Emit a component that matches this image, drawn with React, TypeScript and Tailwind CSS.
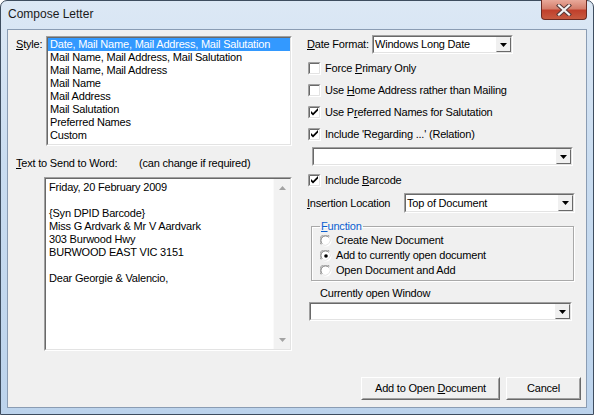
import React from "react";

const U = ({ children }: { children: React.ReactNode }) => (
  <span className="underline decoration-1 underline-offset-[1px]">{children}</span>
);

const Sunken = ({ className = "", children }: { className?: string; children?: React.ReactNode }) => (
  <div className={`border border-t-[#a0a0a0] border-l-[#a0a0a0] border-b-white border-r-white ${className}`}>
    <div className="w-full h-full border border-t-[#696969] border-l-[#696969] border-b-[#e3e3e3] border-r-[#e3e3e3] bg-white flex">
      {children}
    </div>
  </div>
);

const DropBtn = () => (
  <div className="w-[15px] h-full border border-t-[#f0f0f0] border-l-[#f0f0f0] border-b-[#696969] border-r-[#696969] bg-[#f0f0f0] flex items-center justify-center">
    <svg width="7" height="4" viewBox="0 0 7 4">
      <path d="M0 0h7L3.5 4z" fill="#000" />
    </svg>
  </div>
);

const Combo = ({ className = "", value = "" }: { className?: string; value?: string }) => (
  <Sunken className={className}>
    <div className="flex-1 pl-[1px] leading-[13px] flex items-center">{value}</div>
    <DropBtn />
  </Sunken>
);

const Check = ({ checked }: { checked?: boolean }) => (
  <div className="w-[13px] h-[13px] shrink-0">
    <svg width="13" height="13" viewBox="0 0 13 13">
      <rect x="0" y="0" width="13" height="13" fill="#fff" />
      <path d="M0.5 12.5V0.5H12.5" stroke="#a0a0a0" fill="none" />
      <path d="M1.5 11.5V1.5H11.5" stroke="#696969" fill="none" />
      <path d="M1.5 11.5H11.5V1.5" stroke="#e3e3e3" fill="none" />
      <path d="M0.5 12.5H12.5V0.5" stroke="#fff" fill="none" />
      {checked && <path d="M3 5l2 2 5-5v2.6l-5 5-2-2z" fill="#000" />}
    </svg>
  </div>
);

const Radio = ({ checked }: { checked?: boolean }) => (
  <svg width="12" height="12" viewBox="0 0 12 12" className="shrink-0">
    <circle cx="6" cy="6" r="5.5" fill="#fff" />
    <path d="M1.2 9.5A5.5 5.5 0 0 1 9.5 1.2" stroke="#a0a0a0" strokeWidth="1" fill="none" />
    <path d="M2.2 8.8A4.5 4.5 0 0 1 8.8 2.2" stroke="#696969" strokeWidth="1" fill="none" />
    <path d="M9.8 2.5A5.5 5.5 0 0 1 2.5 9.8" stroke="#e3e3e3" strokeWidth="1" fill="none" />
    {checked && <circle cx="6" cy="6" r="1.8" fill="#000" />}
  </svg>
);

const CheckRow = ({ checked, children }: { checked?: boolean; children: React.ReactNode }) => (
  <div className="h-[22px] flex items-center pl-[1px] gap-[4px]">
    <Check checked={checked} />
    <span className="leading-[13px]">{children}</span>
  </div>
);

const RadioRow = ({ checked, children }: { checked?: boolean; children: React.ReactNode }) => (
  <div className="h-[15px] flex items-center gap-[4px]">
    <Radio checked={checked} />
    <span className="leading-[13px]">{children}</span>
  </div>
);

const Button = ({ className = "", children }: { className?: string; children: React.ReactNode }) => (
  <div className={`h-[23px] border border-t-white border-l-white border-b-[#696969] border-r-[#696969] bg-[#f0f0f0] ${className}`}>
    <div className="w-full h-full border border-t-[#f0f0f0] border-l-[#f0f0f0] border-b-[#a0a0a0] border-r-[#a0a0a0] flex items-center justify-center leading-[13px]">
      <span>{children}</span>
    </div>
  </div>
);

const styles = [
  "Date, Mail Name, Mail Address, Mail Salutation",
  "Mail Name, Mail Address, Mail Salutation",
  "Mail Name, Mail Address",
  "Mail Name",
  "Mail Address",
  "Mail Salutation",
  "Preferred Names",
  "Custom",
];

const letter = [
  "Friday, 20 February 2009",
  "",
  "{Syn DPID Barcode}",
  "Miss G Ardvark & Mr V Aardvark",
  "303 Burwood Hwy",
  "BURWOOD EAST VIC 3151",
  "",
  "Dear Georgie & Valencio,",
];

export default function App() {
  return (
    <div
      className="w-[594px] h-[415px] flex flex-col rounded-t-[7px] border border-[#3e4d5f] bg-[linear-gradient(180deg,#dce8f5_0%,#c9dcf0_40%,#bcd3ec_100%)] text-black"
      style={{ fontFamily: '"Liberation Sans", Arial, sans-serif' }}
    >
      <div className="h-[28px] flex items-start justify-between shrink-0">
        <div className="pl-[7px] pt-[6px] text-[12px] leading-[15px] text-[#1a1a1a]">Compose Letter</div>
        <div className="mr-[6px] mt-[-1px] w-[46px] h-[20px] rounded-b-[4px] border border-t-0 border-[#6b2a22] bg-[linear-gradient(180deg,#e9a99a_0%,#d47e6c_45%,#c0402c_55%,#c75a40_100%)] flex items-center justify-center">
          <svg width="16" height="12" viewBox="0 0 16 12">
            <path d="M3 1.5l10 9M13 1.5l-10 9" stroke="#5a3a38" strokeWidth="4.2" strokeLinecap="square" />
            <path d="M3 1.5l10 9M13 1.5l-10 9" stroke="#f4f4f4" strokeWidth="2.2" strokeLinecap="square" />
          </svg>
        </div>
      </div>

      <div className="flex-1 mx-[6px] mb-[6px] border border-[#8a9cb3] bg-[#f0f0f0] flex text-[11px] tracking-[-0.2px]">
        {/* Left column */}
        <div className="w-[285px] pl-[8px] pt-[6px] flex flex-col shrink-0">
          <div className="flex">
            <div className="w-[30px] pt-[2px] leading-[13px]">
              <U>S</U>tyle:
            </div>
            <Sunken className="w-[246px] h-[110px]">
              <div className="flex-1 flex flex-col">
                {styles.map((s, i) => (
                  <div
                    key={s}
                    className={`h-[13px] leading-[13px] pl-[2px] whitespace-nowrap ${i === 0 ? "bg-[#3399ff] text-white" : ""}`}
                  >
                    {s}
                  </div>
                ))}
              </div>
            </Sunken>
          </div>

          <div className="mt-[10px] flex leading-[14px] h-[14px]">
            <span className="w-[123px]">
              <U>T</U>ext to Send to Word:
            </span>
            <span>(can change if required)</span>
          </div>

          <Sunken className="ml-[28px] mt-[7px] w-[248px] h-[174px]">
            <div className="flex-1 pl-[3px] pt-[2px] flex flex-col">
              {letter.map((l, i) => (
                <div key={i} className="h-[13px] leading-[13px] whitespace-nowrap">
                  {l}
                </div>
              ))}
            </div>
            <div className="w-[17px] h-full bg-[#f2f2f2] border-l border-[#fafafa] flex flex-col items-center justify-between py-[7px]">
              <svg width="7" height="4" viewBox="0 0 7 4">
                <path d="M3.5 0L7 4H0z" fill="#a3a3a3" />
              </svg>
              <svg width="7" height="4" viewBox="0 0 7 4">
                <path d="M0 0h7L3.5 4z" fill="#a3a3a3" />
              </svg>
            </div>
          </Sunken>
        </div>

        {/* Right column */}
        <div className="flex-1 pl-[14px] pr-[5px] pt-[5px] pb-[7px] flex flex-col">
          <div className="flex items-center h-[19px]">
            <span className="w-[65px] leading-[13px]">
              <U>D</U>ate Format:
            </span>
            <Combo className="w-[141px] h-[19px]" value="Windows Long Date" />
          </div>

          <div className="mt-[3px]">
            <CheckRow>
              Force <U>P</U>rimary Only
            </CheckRow>
            <CheckRow>
              Use <U>H</U>ome Address rather than Mailing
            </CheckRow>
            <CheckRow checked>
              Use P<U>r</U>eferred Names for Salutation
            </CheckRow>
            <CheckRow checked>
              Include 'Re<U>g</U>arding ...' (Relation)
            </CheckRow>
          </div>

          <Combo className="ml-[5px] mt-[2px] w-[261px] h-[19px]" />

          <div className="mt-[3px]">
            <CheckRow checked>
              Include <U>B</U>arcode
            </CheckRow>
          </div>

          <div className="mt-[2px] flex items-center h-[20px]">
            <span className="w-[97px] leading-[13px]">
              <U>I</U>nsertion Location
            </span>
            <Combo className="w-[171px] h-[20px]" value="Top of Document" />
          </div>

          <fieldset className="mt-[7px] ml-[4px] w-[263px] border border-[#a9a9a9] shadow-[inset_1px_1px_0_#fff,1px_1px_0_#fff] pb-[2px] pl-[8px]">
            <legend className="ml-[0px] px-[1px] leading-[13px] text-[#0a5fd0]">
              <U>F</U>unction
            </legend>
            <RadioRow>Create New Document</RadioRow>
            <RadioRow checked>Add to currently open document</RadioRow>
            <RadioRow>Open Document and Add</RadioRow>
          </fieldset>

          <div className="mt-[5px] ml-[13px] h-[14px] leading-[14px]">Currently open Window</div>
          <Combo className="ml-[2px] mt-[2px] w-[263px] h-[19px]" />

          <div className="mt-auto flex justify-end gap-[6px]">
            <Button className="w-[139px]">
              Add to Open <U>D</U>ocument
            </Button>
            <Button className="w-[75px]">Cancel</Button>
          </div>
        </div>
      </div>
    </div>
  );
}
